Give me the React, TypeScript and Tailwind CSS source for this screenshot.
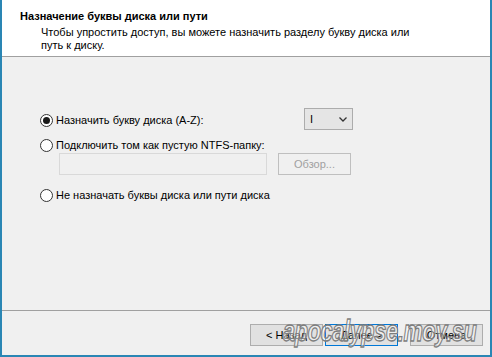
const font = { fontFamily: '"Liberation Sans", Arial, sans-serif' }

function Radio({ checked }: { checked?: boolean }) {
  return (
    <span className="flex h-[13px] w-[13px] shrink-0 items-center justify-center rounded-full border border-[#333333] bg-white">
      {checked ? <span className="h-[7px] w-[7px] rounded-full bg-[#1a1a1a]" /> : null}
    </span>
  )
}

function WizardButton({ label, primary }: { label: string; primary?: boolean }) {
  return (
    <button
      className={`flex h-[22px] w-[73px] items-center justify-center bg-[#e1e1e1] text-[11px] text-black ${
        primary ? 'border border-[#0078d7]' : 'border border-[#adadad]'
      }`}
    >
      {label}
    </button>
  )
}

export default function App() {
  return (
    <div
      className="relative flex h-[357px] w-[492px] flex-col overflow-hidden border-x-2 border-b-2 border-[#2a86b4] bg-[#f0f0f0] text-[11px] text-black"
      style={font}
    >
      <div className="h-[57px] shrink-0 border-b border-[#a0a0a0] bg-white pl-[18px] pt-[9px]">
        <div className="font-bold leading-[15px]">Назначение буквы диска или пути</div>
        <div className="ml-[21px] mt-[2px] leading-[13px]">
          Чтобы упростить доступ, вы можете назначить разделу букву диска или
          <br />
          путь к диску.
        </div>
      </div>

      <div className="flex h-[254px] shrink-0 flex-col border-b border-[#a0a0a0] pl-[38px] pt-[51px]">
        <div className="flex h-[22px] items-center">
          <div className="flex w-[264px] items-center gap-[3px] pt-[2px]">
            <Radio checked />
            <span className="leading-[15px]">Назначить букву диска (A-Z):</span>
          </div>
          <div className="flex h-[22px] w-[49px] items-center justify-between border border-[#acacac] bg-[#e5e5e5] pl-[5px] pr-[5px]">
            <span className="leading-none">I</span>
            <svg width="8" height="5" viewBox="0 0 8 5" fill="none">
              <path d="M0.5 0.5 L4 4 L7.5 0.5" stroke="#333" strokeWidth="1.3" />
            </svg>
          </div>
        </div>

        <div className="mt-[7px] flex h-[16px] items-center gap-[3px]">
          <Radio />
          <span className="leading-[15px]">Подключить том как пустую NTFS-папку:</span>
        </div>

        <div className="ml-[19px] flex h-[22px] items-center gap-[11px]">
          <div className="h-[22px] w-[208px] border border-[#d9d9d9] bg-[#f0f0f0]" />
          <div className="flex h-[22px] w-[73px] items-center justify-center border border-[#bfbfbf] bg-[#f0f0f0] text-[#a0a0a0]">
            Обзор...
          </div>
        </div>

        <div className="mt-[12px] flex h-[16px] items-center gap-[3px]">
          <Radio />
          <span className="leading-[15px]">Не назначать буквы диска или пути диска</span>
        </div>
      </div>

      <div className="flex flex-1 items-start justify-end pr-[7px] pt-[13px]">
        <WizardButton label="< Назад" />
        <div className="ml-[2px]">
          <WizardButton label="Далее >" primary />
        </div>
        <div className="ml-[12px]">
          <WizardButton label="Отмена" />
        </div>
      </div>

      <span
        className="pointer-events-none absolute left-[281px] top-[317px] origin-left scale-x-[0.75] text-[29px] font-bold italic leading-none tracking-[-0.5px] text-white/45 [-webkit-text-stroke:1.3px_#7d7d7d]"
        style={font}
      >
        apocalypse.moy.su
      </span>
    </div>
  )
}
